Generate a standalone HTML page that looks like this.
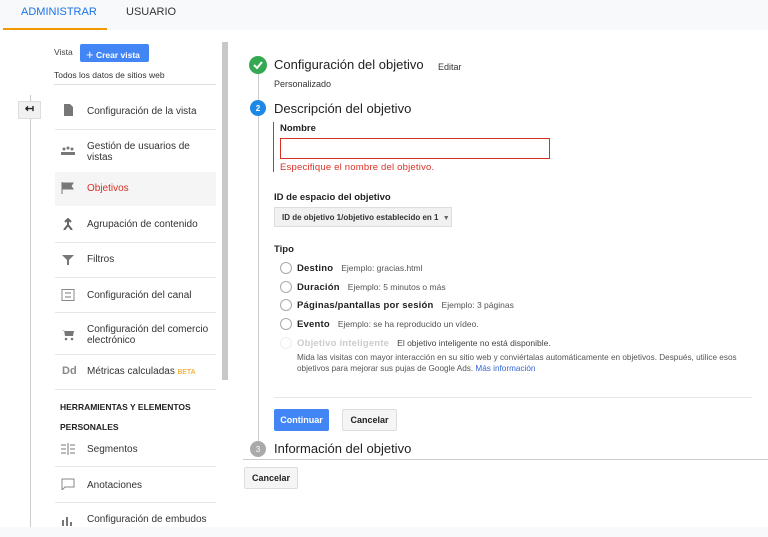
<!DOCTYPE html>
<html><head><meta charset="utf-8"><style>
*{margin:0;padding:0;box-sizing:border-box}
body{width:768px;height:537px;overflow:hidden;background:#fff;font-family:"Liberation Sans",sans-serif;color:#333;position:relative}
.a{position:absolute;white-space:nowrap}
.sep{position:absolute;left:55px;width:161px;height:1px;background:#e6e6e6}
.mi{position:absolute;left:87px;font-size:10px;color:#333;line-height:11px}
.ic{position:absolute;left:61px;width:14px;height:12px}
.rad{position:absolute;left:280px;width:12px;height:12px;border:1px solid #aaa;border-radius:50%;background:#fff}
.rt{position:absolute;left:297px;font-size:9.5px;color:#222;font-weight:bold;letter-spacing:.2px}
.ex{font-weight:normal;color:#555;margin-left:8px;font-size:8.5px;letter-spacing:0}
.btn{position:absolute;font-size:9px;font-weight:bold;text-align:center;border-radius:2px}
</style></head><body>
<div class="a" style="left:0;top:0;width:768px;height:30px;background:#f8f9fa"></div>
<div class="a" style="left:21px;top:6px;font-size:11px;color:#1a73e8">ADMINISTRAR</div>
<div class="a" style="left:126px;top:6px;font-size:11px;color:#333">USUARIO</div>
<div class="a" style="left:3px;top:28px;width:104px;height:2px;background:#f29900"></div>
<div class="a" style="left:0;top:527px;width:768px;height:10px;background:#f8f9fa"></div>

<div class="a" style="left:54px;top:47px;font-size:8.5px;color:#444">Vista</div>
<div class="a" style="left:80px;top:44px;width:69px;height:18px;background:#4285f4;border-radius:2px;color:#fff;font-size:8.5px;font-weight:bold;padding:3px 0 0 6px"><span style="font-size:13px;font-weight:normal;vertical-align:-1px">+</span> Crear vista</div>
<div class="a" style="left:54px;top:70px;font-size:8.5px;color:#333">Todos los datos de sitios web</div>
<div class="a" style="left:54px;top:84px;width:162px;height:1px;background:#ddd"></div>
<div class="a" style="left:30px;top:95px;width:1px;height:432px;background:#ccc"></div>
<div class="a" style="left:18px;top:101px;width:23px;height:18px;background:#f1f1f1;border:1px solid #ddd;font-size:11px;text-align:center;line-height:15px;color:#222;font-weight:bold">↤</div>
<div class="a" style="left:222px;top:42px;width:6px;height:338px;background:#c8c8c8"></div>

<svg class="ic" style="top:104px" viewBox="0 0 14 12"><path d="M3 0h6l3 3v9H3z" fill="#777"/></svg>
<div class="mi" style="top:106px">Configuración de la vista</div>
<div class="sep" style="top:129px"></div>
<svg class="ic" style="top:146px" viewBox="0 0 14 12"><circle cx="3" cy="3" r="1.5" fill="#777"/><circle cx="7" cy="2" r="1.5" fill="#777"/><circle cx="11" cy="3" r="1.5" fill="#777"/><rect x="0" y="6" width="14" height="3" fill="#777"/></svg>
<div class="mi" style="top:141px">Gestión de usuarios de<br>vistas</div>
<div class="a" style="left:55px;top:172px;width:161px;height:34px;background:#f5f5f5"></div>
<svg class="ic" style="top:182px" viewBox="0 0 14 12"><path d="M1 0v12M1 1h11l-2 3 2 3H1" fill="#777" stroke="#777"/></svg>
<div class="mi" style="top:183px;color:#d93025">Objetivos</div>
<svg class="ic" style="top:218px" viewBox="0 0 14 12"><path d="M3 12l4-5 4 5M7 7V1M4 4l3-3 3 3" fill="none" stroke="#666" stroke-width="2"/></svg>
<div class="mi" style="top:219px">Agrupación de contenido</div>
<div class="sep" style="top:242px"></div>
<svg class="ic" style="top:254px" viewBox="0 0 14 12"><path d="M1 1h12L8 6v5H6V6z" fill="#777"/></svg>
<div class="mi" style="top:254px">Filtros</div>
<div class="sep" style="top:277px"></div>
<svg class="ic" style="top:289px" viewBox="0 0 14 12"><rect x="1" y="0.5" width="12" height="11" fill="none" stroke="#888"/><path d="M4 4h6M4 8h6" stroke="#777"/></svg>
<div class="mi" style="top:290px">Configuración del canal</div>
<div class="sep" style="top:312px"></div>
<svg class="ic" style="top:329px" viewBox="0 0 14 12"><path d="M1 1h2l1 6h8l1-5H4" fill="#777"/><circle cx="5" cy="10" r="1.3" fill="#777"/><circle cx="11" cy="10" r="1.3" fill="#777"/></svg>
<div class="mi" style="top:324px">Configuración del comercio<br>electrónico</div>
<div class="sep" style="top:354px"></div>
<div class="a" style="left:62px;top:365px;font-size:11px;color:#888;font-weight:bold">Dd</div>
<div class="mi" style="top:366px">Métricas calculadas <span style="color:#f29900;font-size:7px">BETA</span></div>
<div class="sep" style="top:389px"></div>
<div class="a" style="left:60px;top:402px;font-size:8.5px;font-weight:bold;color:#222">HERRAMIENTAS Y ELEMENTOS</div>
<div class="a" style="left:60px;top:422px;font-size:8.5px;font-weight:bold;color:#222">PERSONALES</div>
<svg class="ic" style="top:443px" viewBox="0 0 14 12"><path d="M0 2h5M0 6h5M0 10h5M7 0v12M9 2h5M9 6h5M9 10h5" stroke="#777"/></svg>
<div class="mi" style="top:444px">Segmentos</div>
<div class="sep" style="top:466px"></div>
<svg class="ic" style="top:478px" viewBox="0 0 14 12"><path d="M1 1h12v8H4l-3 3z" fill="none" stroke="#888"/></svg>
<div class="mi" style="top:480px">Anotaciones</div>
<div class="sep" style="top:502px"></div>
<svg class="ic" style="top:514px" viewBox="0 0 14 12"><path d="M1 12V6h2v6M5 12V3h2v9M9 12V8h2v4" fill="#777"/></svg>
<div class="mi" style="top:514px">Configuración de embudos</div>

<div class="a" style="left:258px;top:70px;width:1px;height:380px;background:#ccc"></div>
<svg class="a" style="left:249px;top:56px" width="18" height="18"><circle cx="9" cy="9" r="9" fill="#34a853"/><path d="M5 9l3 3 5-6" fill="none" stroke="#fff" stroke-width="2"/></svg>
<div class="a" style="left:274px;top:57px;font-size:13px;color:#222">Configuración del objetivo</div>
<div class="a" style="left:438px;top:62px;font-size:9px;color:#333">Editar</div>
<div class="a" style="left:274px;top:79px;font-size:9px;color:#333">Personalizado</div>
<svg class="a" style="left:250px;top:100px" width="16" height="16"><circle cx="8" cy="8" r="8" fill="#1e88e5"/><text x="8" y="11" font-size="8" fill="#fff" text-anchor="middle" font-family="Liberation Sans" font-weight="bold">2</text></svg>
<div class="a" style="left:274px;top:101px;font-size:13px;color:#222">Descripción del objetivo</div>
<div class="a" style="left:273px;top:122px;width:1px;height:50px;background:#d93025"></div>
<div class="a" style="left:280px;top:123px;font-size:9.5px;font-weight:bold;color:#222">Nombre</div>
<div class="a" style="left:280px;top:138px;width:270px;height:21px;border:1px solid #d93025"></div>
<div class="a" style="left:280px;top:162px;font-size:9.5px;color:#d93025;letter-spacing:.2px">Especifique el nombre del objetivo.</div>
<div class="a" style="left:274px;top:192px;font-size:9.5px;font-weight:bold;color:#222">ID de espacio del objetivo</div>
<div class="a" style="left:274px;top:207px;width:178px;height:20px;background:#f1f1f1;border:1px solid #ddd;font-size:8px;font-weight:bold;color:#333;padding:5px 0 0 7px">ID de objetivo 1/objetivo establecido en 1 <span style="color:#666;font-size:7px;margin-left:2px">▼</span></div>
<div class="a" style="left:274px;top:244px;font-size:9.5px;font-weight:bold;color:#222">Tipo</div>
<div class="rad" style="top:262px"></div><div class="rt" style="top:263px">Destino<span class="ex">Ejemplo: gracias.html</span></div>
<div class="rad" style="top:281px"></div><div class="rt" style="top:282px">Duración<span class="ex">Ejemplo: 5 minutos o más</span></div>
<div class="rad" style="top:299px"></div><div class="rt" style="top:300px">Páginas/pantallas por sesión<span class="ex">Ejemplo: 3 páginas</span></div>
<div class="rad" style="top:318px"></div><div class="rt" style="top:319px">Evento<span class="ex">Ejemplo: se ha reproducido un vídeo.</span></div>
<div class="rad" style="top:337px;border-color:#eee"></div><div class="rt" style="top:338px;color:#ccc">Objetivo inteligente<span class="ex" style="color:#444">El objetivo inteligente no está disponible.</span></div>
<div class="a" style="left:297px;top:352px;font-size:8.2px;color:#555;line-height:11px">Mida las visitas con mayor interacción en su sitio web y conviértalas automáticamente en objetivos. Después, utilice esos<br>objetivos para mejorar sus pujas de Google Ads. <span style="color:#3367d6">Más información</span></div>
<div class="a" style="left:274px;top:397px;width:478px;height:1px;background:#e6e6e6"></div>
<div class="btn" style="left:274px;top:409px;width:55px;height:22px;background:#4285f4;color:#fff;line-height:22px">Continuar</div>
<div class="btn" style="left:342px;top:409px;width:55px;height:22px;background:#f5f5f5;border:1px solid #ddd;color:#222;line-height:20px">Cancelar</div>
<svg class="a" style="left:250px;top:441px" width="16" height="16"><circle cx="8" cy="8" r="8" fill="#aaa"/><text x="8" y="11" font-size="8" fill="#fff" text-anchor="middle" font-family="Liberation Sans">3</text></svg>
<div class="a" style="left:274px;top:441px;font-size:13px;color:#222">Información del objetivo</div>
<div class="a" style="left:243px;top:459px;width:525px;height:1px;background:#ccc"></div>
<div class="btn" style="left:244px;top:467px;width:54px;height:22px;background:#f5f5f5;border:1px solid #ddd;color:#222;line-height:20px">Cancelar</div>
</body></html>
